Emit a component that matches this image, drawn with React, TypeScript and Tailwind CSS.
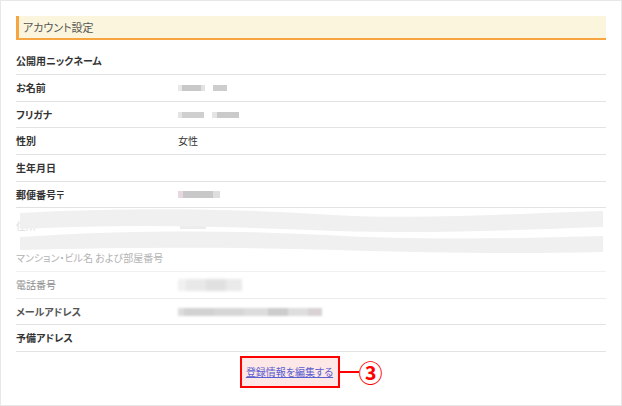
import React from "react";

type Blk = { w: number; c: string; gap?: number };

function Blur({ blocks, h = 6, blur = "blur-[0.6px]" }: { blocks: Blk[]; h?: number; blur?: string }) {
  return (
    <div className={`flex items-center ${blur}`}>
      {blocks.map((b, i) => (
        <div key={i} style={{ width: b.w, height: h, background: b.c, marginLeft: b.gap ?? 0 }} />
      ))}
    </div>
  );
}

function Row({
  label,
  h,
  labelCls = "font-bold text-[#333]",
  border = "border-[#e2e2e2]",
  children,
}: {
  label: string;
  h: string;
  labelCls?: string;
  border?: string;
  children?: React.ReactNode;
}) {
  return (
    <div className={`flex items-center border-b ${border} ${h}`}>
      <div className={`w-[162px] shrink-0 ${labelCls}`}>{label}</div>
      <div className="flex-1 text-[#333]">{children}</div>
    </div>
  );
}

export default function App() {
  return (
    <div className="w-[622px] h-[406px] bg-white border border-[#e8e8e8] font-['Noto_Sans_CJK_JP',sans-serif] [font-feature-settings:'palt'] text-[10px] leading-none">
      <div className="px-[15px] pt-[15px]">
        <div className="h-[24px] bg-[#faf5dc] border-l-[3px] border-l-[#f7a541] border-b-2 border-b-[#f7a541] flex items-center pl-[4px] text-[11px] text-[#555]">
          アカウント設定
        </div>
        <div className="mt-[8px]">
          <Row label="公開用ニックネーム" h="h-[27px]" />
          <Row label="お名前" h="h-[27px]">
            <Blur
              blocks={[
                { w: 4, c: "#e8e8e8" },
                { w: 19, c: "#c8c8c8" },
                { w: 4, c: "#e2e2e2" },
                { w: 14, c: "#cdcdcd", gap: 8 },
              ]}
            />
          </Row>
          <Row label="フリガナ" h="h-[26px]">
            <Blur
              blocks={[
                { w: 4, c: "#e4e4e4" },
                { w: 22, c: "#cfcfcf" },
                { w: 5, c: "#e4e4e4", gap: 8 },
                { w: 22, c: "#cacaca" },
              ]}
            />
          </Row>
          <Row label="性別" h="h-[27px]">
            女性
          </Row>
          <Row label="生年月日" h="h-[27px]" />
          <Row label="郵便番号〒" h="h-[26px]">
            <Blur
              blocks={[
                { w: 5, c: "#e6d8de" },
                { w: 30, c: "#c8c8c8" },
                { w: 7, c: "#dedede" },
              ]}
              h={7}
            />
          </Row>
          <div className="relative">
            <Row label="住所" h="h-[37px]" labelCls="text-[#dcdcdc]" border="border-transparent">
              <div className="pl-[2px]">
                <Blur blocks={[{ w: 26, c: "#ececec" }]} h={5} />
              </div>
            </Row>
            <Row label="マンション・ビル名 および部屋番号" h="h-[27px]" labelCls="text-[#b3b3b3]" border="border-[#f0f0f0]" />
            <svg className="absolute left-0 top-0 w-full h-[48px]" viewBox="0 0 590 48" preserveAspectRatio="none">
              <path
                d="M4 5 C100 0 200 0 300 6 C400 13 500 5 587 3 L587 19 C500 22 420 26 320 23 C220 19 120 15 4 21 Z"
                fill="#f0f0f0"
              />
              <path
                d="M4 29 C110 22 210 22 310 27 C410 33 510 30 587 28 L587 44 C500 46 420 45 320 42 C220 39 120 39 4 42 Z"
                fill="#f0f0f0"
              />
            </svg>
          </div>
          <Row label="電話番号" h="h-[27px]" labelCls="text-[#8c8c8c]" border="border-[#ececec]">
            <Blur
              blocks={[
                { w: 8, c: "#f0f0f0" },
                { w: 20, c: "#e8e8e8" },
                { w: 20, c: "#e0e0e0" },
                { w: 16, c: "#eaeaea" },
              ]}
              h={12}
              blur="blur-[1.5px]"
            />
          </Row>
          <Row label="メールアドレス" h="h-[26px]" labelCls="font-bold text-[#555]">
            <Blur
              blocks={[
                { w: 6, c: "#dcdcdc" },
                { w: 30, c: "#d2d2d2" },
                { w: 30, c: "#d6d6d6" },
                { w: 24, c: "#dcdcdc" },
                { w: 20, c: "#cccccc" },
                { w: 20, c: "#dedede" },
                { w: 14, c: "#d8d2d4" },
              ]}
              h={8}
              blur="blur-[1px]"
            />
          </Row>
          <Row label="予備アドレス" h="h-[27px]" />
        </div>
        <div className="mt-[4px] flex justify-center items-center">
          <div className="w-[100px] h-[32px] border-2 border-[#ff0000] bg-[#fde7e7] flex items-center justify-center">
            <span className="text-[10px] text-[#5a5fcf] underline">登録情報を編集する</span>
          </div>
          <div className="w-[19px] h-[2px] bg-[#ff0000]" />
          <span className="text-[24px] leading-none text-[#ff0000] font-bold">③</span>
        </div>
      </div>
    </div>
  );
}
